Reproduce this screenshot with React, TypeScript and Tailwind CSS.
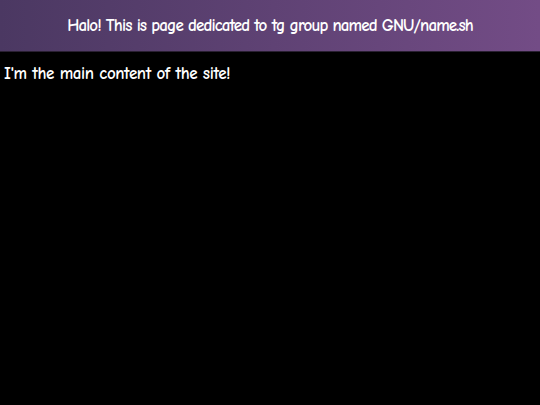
export default function App() {
  return (
    <div className="min-h-[405px] bg-black text-white font-['Comic_Sans_MS','Comic_Neue','DejaVu_Sans_Condensed','Liberation_Sans',sans-serif]">
      {/* Header */}
      <header className="h-[52px] flex items-center justify-center bg-gradient-to-r from-[#4b3862] to-[#734c86] border-b border-[#2a2032]">
        <h1 className="text-[17px] leading-6 font-bold tracking-[-0.9px]">Halo! This is page dedicated to tg group named GNU/name.sh</h1>
      </header>

      {/* Main */}
      <main className="px-1 pt-[10px]">
        <p className="text-[17px] leading-6 font-bold tracking-[-0.4px]">I'm the main content of the site!</p>
      </main>
    </div>
  );
}
